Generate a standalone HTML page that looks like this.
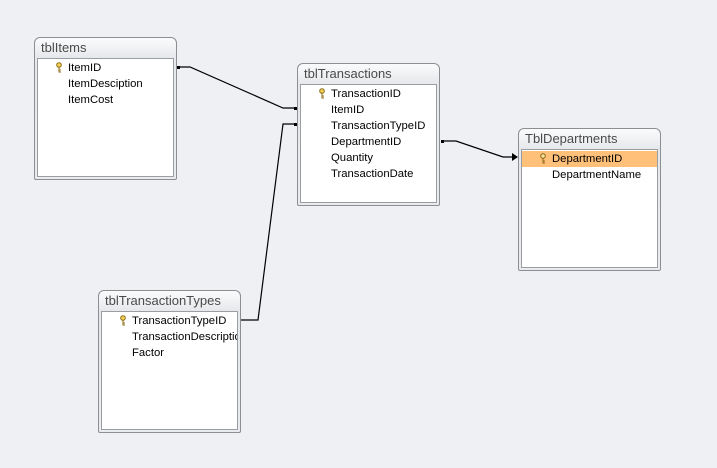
<!DOCTYPE html>
<html><head><meta charset="utf-8"><style>
body{margin:0;width:717px;height:468px;background:#eef0f3;position:relative;overflow:hidden;font-family:"Liberation Sans",sans-serif}
.t{position:absolute;width:141px;height:141px;border:1px solid #8c8e92;border-radius:6px 6px 2px 2px;background:linear-gradient(#fbfbfc,#e6e8eb 20px,#e9ebee);}
.t .h{position:absolute;left:6px;top:2px;font-size:13px;color:#4a4a4a}
.t .l{position:absolute;left:2px;top:20px;width:137px;background:#fff;border:1px solid #9a9da2;overflow:hidden;padding-top:1px;box-sizing:border-box;height:119px}
.r{height:16px;line-height:16px;font-size:11.3px;color:#000;padding-left:30px;white-space:nowrap;position:relative}
.r.s{background:#ffc07a}
.k{position:absolute;left:18px;top:2px;width:6px;height:11px}
</style></head><body>
<svg width="717" height="468" style="position:absolute;left:0;top:0">
<g stroke="#000" stroke-width="1.2" fill="none">
<polyline points="177,67 190,67 283,108 297,108"/>
<polyline points="241,320 258,320 283,124 297,124"/>
<polyline points="441,141 456,141 503,157 514,157"/>
</g>
<g fill="#000">
<rect x="177" y="66" width="3" height="3"/><rect x="294" y="107" width="3" height="3"/>
<rect x="238" y="319" width="3" height="3"/><rect x="294" y="123" width="3" height="3"/>
<rect x="441" y="140" width="3" height="3"/>
<polygon points="512,153 518,157 512,161"/>
</g>
</svg>
<div class="t" style="left:34px;top:37px"><div class="h">tblItems</div><div class="l">
<div class="r"><svg class="k" viewBox="0 0 6 11"><circle cx="3" cy="3" r="2.3" fill="#f5d35a" stroke="#8a6a10" stroke-width="1"/><path d="M3 5V10.5M3 8H5M3 10H5" stroke="#8a6a10"/></svg>ItemID</div>
<div class="r">ItemDesciption</div><div class="r">ItemCost</div></div></div>
<div class="t" style="left:297px;top:63px"><div class="h">tblTransactions</div><div class="l">
<div class="r"><svg class="k" viewBox="0 0 6 11"><circle cx="3" cy="3" r="2.3" fill="#f5d35a" stroke="#8a6a10" stroke-width="1"/><path d="M3 5V10.5M3 8H5M3 10H5" stroke="#8a6a10"/></svg>TransactionID</div>
<div class="r">ItemID</div><div class="r">TransactionTypeID</div><div class="r">DepartmentID</div><div class="r">Quantity</div><div class="r">TransactionDate</div></div></div>
<div class="t" style="left:518px;top:128px"><div class="h">TblDepartments</div><div class="l">
<div class="r s"><svg class="k" viewBox="0 0 6 11"><circle cx="3" cy="3" r="2.3" fill="#f5e0a0" stroke="#8a6a10" stroke-width="1"/><path d="M3 5V10.5M3 8H5M3 10H5" stroke="#8a6a10"/></svg>DepartmentID</div>
<div class="r">DepartmentName</div></div></div>
<div class="t" style="left:98px;top:290px"><div class="h">tblTransactionTypes</div><div class="l">
<div class="r"><svg class="k" viewBox="0 0 6 11"><circle cx="3" cy="3" r="2.3" fill="#f5d35a" stroke="#8a6a10" stroke-width="1"/><path d="M3 5V10.5M3 8H5M3 10H5" stroke="#8a6a10"/></svg>TransactionTypeID</div>
<div class="r">TransactionDescription</div><div class="r">Factor</div></div></div>
</body></html>
